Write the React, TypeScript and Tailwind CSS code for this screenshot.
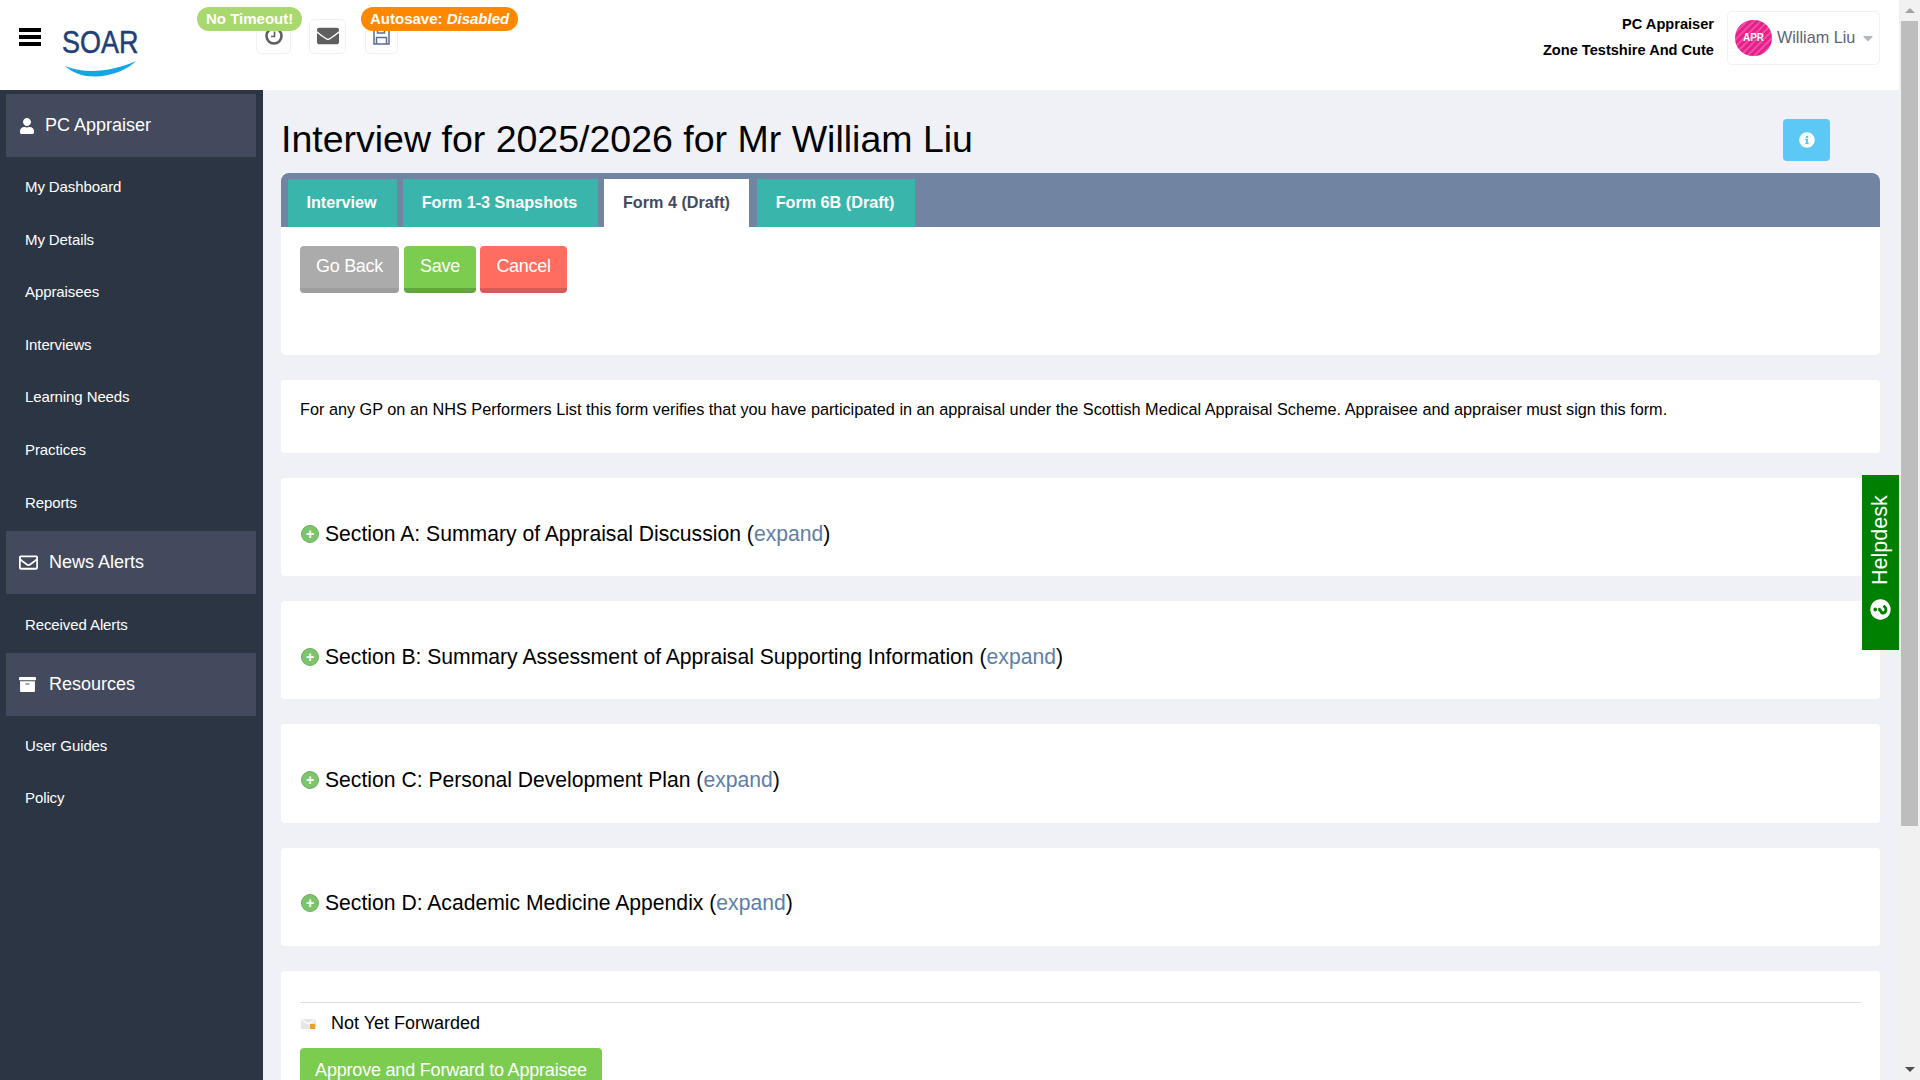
import React from 'react';
import { FaEnvelope, FaUser, FaRegEnvelope, FaArchive, FaInfoCircle, FaQuestionCircle, FaCaretDown } from 'react-icons/fa';

const PersonalLinks = ['My Dashboard', 'My Details', 'Appraisees', 'Interviews', 'Learning Needs', 'Practices', 'Reports'];

const sections = [
  'Section A: Summary of Appraisal Discussion',
  'Section B: Summary Assessment of Appraisal Supporting Information',
  'Section C: Personal Development Plan',
  'Section D: Academic Medicine Appendix',
];

const SideHead = ({ icon, label, gap }: { icon: React.ReactNode; label: string; gap: string }) => (
  <div className={`ml-[6px] mr-[7px] flex h-[63px] items-center bg-[#434a5d] pl-[13px] text-[18px] text-white ${gap}`}>
    {icon}
    <span>{label}</span>
  </div>
);

const SideLink = ({ label }: { label: string }) => (
  <div className="flex h-[52.6px] items-center pl-[25px] text-[15px] tracking-[-0.1px] text-white">{label}</div>
);

const Logo = () => (
  <div className="relative ml-[21px] mt-[-6px] h-[60px] w-[84px]">
    <span className="absolute left-0 top-[11px] origin-left scale-x-[0.87] text-[31px] leading-[40px] text-[#1f3f78] [-webkit-text-stroke:0.5px_#1f3f78]">SOAR</span>
    <svg className="absolute left-[3px] top-[49px]" width="72" height="18" viewBox="0 0 72 18">
      <path d="M0 5 C 22 14, 48 10, 71 0 C 58 14, 20 24, 0 5 Z" fill="#12a7e2" />
    </svg>
  </div>
);

const SectionCard = ({ title }: { title: string }) => (
  <div className="flex h-[98.2px] items-center rounded-[4px] bg-white pl-[20px] pt-[13px] text-[21.15px] text-black">
    <span className="mr-[6px] flex h-[18px] w-[18px] items-center justify-center rounded-full border border-[#6fae5c] bg-[#7cc46d] text-[14px] font-bold leading-none text-white">+</span>
    <span>
      {title} (<span className="text-[#5d7ea6]">expand</span>)
    </span>
  </div>
);

export default function App() {
  return (
    <div className="relative flex h-screen overflow-hidden bg-[#f0f1f6] [font-family:'Liberation_Sans',Arial,sans-serif]">
      <div className="flex min-w-0 flex-1 flex-col">
        {/* top bar */}
        <header className="relative flex h-[90px] shrink-0 items-center bg-white">
          <svg className="ml-[19px] mt-[-16px]" width="22" height="18" viewBox="0 0 22 18" fill="#000">
            <rect y="0" width="22" height="4" />
            <rect y="7" width="22" height="4" />
            <rect y="14" width="22" height="4" />
          </svg>
          <Logo />
          <div className="absolute left-[197px] top-[7px] z-10 rounded-full bg-[#a9d86e] px-[9px] text-[15px] font-bold leading-[24px] text-white">No Timeout!</div>
          <div className="absolute left-[361px] top-[7px] z-10 rounded-full bg-[#ff8800] px-[9px] text-[15px] font-bold leading-[24px] text-white">
            Autosave: <em>Disabled</em>
          </div>
          <div className="ml-[110px] mt-[-18px] flex items-center">
            <div className="flex h-[35px] w-[35px] items-center justify-center rounded-[5px] border border-[#f0f1f6]">
              <svg width="18" height="18" viewBox="0 0 18 18" fill="none" stroke="#5f5f5f">
                <circle cx="9" cy="9" r="7.5" strokeWidth="2.6" />
                <path d="M9.5 4.5 V9.5 H6" strokeWidth="1.6" />
              </svg>
            </div>
            <div className="ml-[18px] flex h-[35px] w-[37px] items-center justify-center rounded-[5px] border border-[#f0f1f6] text-[#5f5f5f]">
              <FaEnvelope className="text-[22px]" />
            </div>
            <div className="ml-[19px] flex h-[35px] w-[33px] items-center justify-center rounded-[5px] border border-[#f0f1f6]">
              <svg width="17" height="18" viewBox="0 0 17 18" fill="none" stroke="#5d6b8c" strokeWidth="1.5">
                <path d="M1 1 H13 L16 4 V17 H1 Z" />
                <path d="M4.5 1 V6 H11.5 V1" />
                <path d="M3.5 17 V10.5 H13.5 V17" />
              </svg>
            </div>
          </div>
          <div className="ml-auto mr-[13px] mt-[-16px] text-right text-[14.6px] font-bold leading-[26px] text-black">
            <div>PC Appraiser</div>
            <div>Zone Testshire And Cute</div>
          </div>
          <div className="mr-[19px] mt-[-15px] flex h-[54px] w-[153px] items-center rounded-[5px] border border-[#f0f1f6] pl-[7px] text-[16.2px] text-[#5b6478]">
            <div className="flex h-[36px] w-[37px] items-center justify-center rounded-full bg-[#e7218b] bg-[repeating-linear-gradient(135deg,#e7218b_0px,#e7218b_3px,#ee4a9f_3px,#ee4a9f_5px)] text-[10px] font-bold text-white">APR</div>
            <span className="ml-[5px]">William Liu</span>
            <FaCaretDown className="ml-[5px] text-[16px] text-[#b4b8c6]" />
          </div>
        </header>

        <div className="flex min-h-0 flex-1">
          {/* sidebar */}
          <aside className="w-[263px] shrink-0 bg-[#2c3543] pt-[4px]">
            <SideHead icon={<FaUser className="text-[16px]" />} label="PC Appraiser" gap="gap-[10px]" />
            <div className="pb-[2px] pt-[4px]">
              {PersonalLinks.map((l) => (
                <SideLink key={l} label={l} />
              ))}
            </div>
            <SideHead icon={<FaRegEnvelope className="text-[19px]" />} label="News Alerts" gap="gap-[11px]" />
            <div className="pt-[5px]">
              <SideLink label="Received Alerts" />
            </div>
            <div className="mt-[1px]">
              <SideHead icon={<FaArchive className="text-[17px]" />} label="Resources" gap="gap-[13px]" />
            </div>
            <div className="pt-[4px]">
              <SideLink label="User Guides" />
              <SideLink label="Policy" />
            </div>
          </aside>

          {/* main */}
          <main className="min-w-0 flex-1 overflow-hidden pl-[18px] pr-[19px]">
            <div className="flex h-[83px] items-start justify-between">
              <h1 className="pt-[26px] text-[37.5px] leading-[46px] text-black">Interview for 2025/2026 for Mr William Liu</h1>
              <div className="mr-[50px] mt-[29px] flex h-[42px] w-[47px] items-center justify-center rounded-[4px] bg-[#5bc8f5] pb-[1px] text-[16px] text-white">
                <FaInfoCircle />
              </div>
            </div>

            <div className="h-[182px] rounded-[5px] bg-white">
              <div className="flex h-[54px] gap-[6px] rounded-t-[8px] bg-[#7185a3] pl-[7px] pt-[6px] text-[16.2px] font-bold">
                <div className="flex h-[48px] w-[109px] items-center justify-center bg-[#3ab5ab] pb-[1px] pr-[2px] text-white">Interview</div>
                <div className="flex h-[48px] w-[195px] items-center justify-center bg-[#3ab5ab] pb-[1px] pr-[2px] text-white">Form 1-3 Snapshots</div>
                <div className="flex h-[48px] w-[145px] items-center justify-center bg-white pb-[1px] text-[#434a5d]">Form 4 (Draft)</div>
                <div className="ml-[2px] flex h-[48px] w-[158px] items-center justify-center bg-[#3ab5ab] pb-[1px] pr-[2px] text-white">Form 6B (Draft)</div>
              </div>
              <div className="flex gap-[5px] pl-[19px] pt-[19px] text-[18px] tracking-[-0.3px] text-white">
                <div className="flex h-[47px] w-[99px] items-start justify-center rounded-[4px] border-b-[5px] border-[#9e9e9e] bg-[#ababab] pt-[7px]">Go Back</div>
                <div className="flex h-[47px] w-[72px] items-start justify-center rounded-[4px] border-b-[5px] border-[#62a53f] bg-[#7ccc50] pt-[7px]">Save</div>
                <div className="-ml-px flex h-[47px] w-[87px] items-start justify-center rounded-[4px] border-b-[5px] border-[#d45b57] bg-[#ff6c60] pt-[7px]">Cancel</div>
              </div>
            </div>

            <div className="mt-[25px] flex h-[73px] items-center rounded-[4px] bg-white pb-[14px] pl-[19px] text-[16.25px] text-black">
              For any GP on an NHS Performers List this form verifies that you have participated in an appraisal under the Scottish Medical Appraisal Scheme. Appraisee and appraiser must sign this form.
            </div>

            <div className="mt-[25px] flex flex-col gap-[25px]">
              {sections.map((s) => (
                <SectionCard key={s} title={s} />
              ))}
            </div>

            <div className="mt-[25px] rounded-[4px] bg-white px-[19px] pt-[31px]">
              <div className="border-t border-[#dddddd] pt-[6px]">
                <div className="flex h-[30px] items-center text-[18px] text-black">
                  <svg className="ml-[1px] mr-[14px]" width="16" height="12" viewBox="0 0 16 12">
                    <rect x="0" y="1" width="15" height="10" fill="#e6e6e6" />
                    <path d="M0 1 L7.5 6 L15 1" fill="none" stroke="#fafafa" strokeWidth="1.5" />
                    <rect x="9" y="6" width="5" height="5" fill="#e9a02f" />
                  </svg>
                  Not Yet Forwarded
                </div>
                <div className="mt-[9px] flex h-[50px] w-[302px] justify-center rounded-[4px] bg-[#7ccc50] pt-[9px] text-[18px] tracking-[-0.2px] text-white">Approve and Forward to Appraisee</div>
              </div>
            </div>
          </main>
        </div>
      </div>

      {/* scrollbar */}
      <div className="flex w-[21px] shrink-0 flex-col items-center bg-[#f1f1f1]">
        <div className="mt-[8px] h-0 w-0 border-x-[5px] border-b-[5px] border-x-transparent border-b-[#a3a3a3]" />
        <div className="mt-[8px] h-[805px] w-[17px] bg-[#bdbdbd]" />
        <div className="mb-[8px] mt-auto h-0 w-0 border-x-[5px] border-t-[5px] border-x-transparent border-t-[#505050]" />
      </div>

      {/* helpdesk tab */}
      <div className="absolute left-[1862px] top-[475px] flex h-[175px] w-[37px] items-center justify-end bg-[#008000] [writing-mode:vertical-rl] [transform:rotate(180deg)]">
        <div className="flex items-center gap-[14px] pb-[20px] text-[21.5px] text-white">
          <FaQuestionCircle className="-rotate-90 text-[21px]" />
          <span>Helpdesk</span>
        </div>
      </div>
    </div>
  );
}
